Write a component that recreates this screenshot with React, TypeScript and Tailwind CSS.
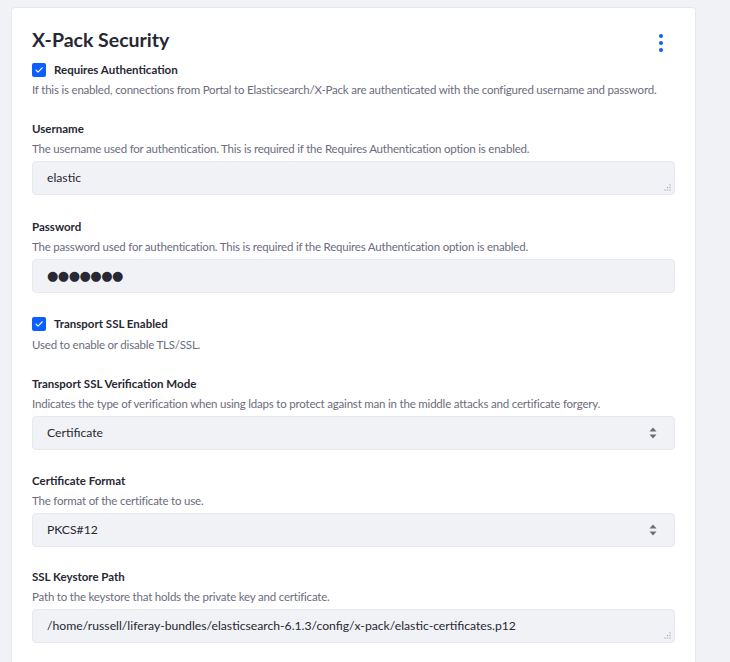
import React from "react";

const font = { fontFamily: "Lato, 'Noto Sans', sans-serif" };

function Check() {
  return (
    <span className="flex h-[14px] w-[14px] shrink-0 items-center justify-center rounded-[2px] bg-[#0b5fff]">
      <svg width="10" height="10" viewBox="0 0 10 10" fill="none">
        <path d="M2 5.2l2 2L8.2 2.8" stroke="#fff" strokeWidth="1.2" strokeLinecap="round" strokeLinejoin="round" />
      </svg>
    </span>
  );
}

function Grip() {
  return (
    <svg className="absolute bottom-[2px] right-[2px]" width="8" height="8" viewBox="0 0 8 8">
      {[
        [6, 1], [6, 3.5], [6, 6], [3.5, 3.5], [3.5, 6], [1, 6],
      ].map(([x, y], i) => (
        <circle key={i} cx={x} cy={y} r="0.7" fill="#a7a9bc" />
      ))}
    </svg>
  );
}

function Arrows() {
  return (
    <svg className="ml-auto mr-[17px]" width="8" height="12" viewBox="0 0 8 12">
      <path d="M4 0.5L7.5 4.5H0.5Z" fill="#6b6c7e" />
      <path d="M4 11.5L7.5 7.5H0.5Z" fill="#6b6c7e" />
    </svg>
  );
}

function Label({ children }: { children: React.ReactNode }) {
  return <div className="text-[11.5px] font-bold leading-4 text-[#272833]">{children}</div>;
}

function Help({ children, className = "" }: { children: React.ReactNode; className?: string }) {
  return (
    <div className={`text-[11.5px] leading-4 tracking-[-0.2px] text-[#6b6c7e] ${className}`}>{children}</div>
  );
}

function Box({ children, textarea, select }: { children: React.ReactNode; textarea?: boolean; select?: boolean }) {
  return (
    <div className="relative mt-[4px] flex h-[34px] items-center rounded-[4px] border border-[#e7e7ed] bg-[#f1f2f5] pl-[14px] text-[12.2px] text-[#272833]">
      {children}
      {select && <Arrows />}
      {textarea && <Grip />}
    </div>
  );
}

export default function App() {
  return (
    <div className="min-h-screen bg-[#f1f2f5] pl-[11px] pr-[34px] pt-[7px]" style={font}>
      <div className="rounded-t-[4px] border border-b-0 border-[#e7e7ed] bg-white px-[20px] pb-[20px] pt-[20px]">
        <div className="flex items-start justify-between">
          <h1 className="text-[19.5px] font-bold leading-6 text-[#272833]">X-Pack Security</h1>
          <div className="mr-[12px] mt-[6px] flex flex-col gap-[3px]">
            <span className="h-[4px] w-[4px] rounded-full bg-[#0b5fff]" />
            <span className="h-[4px] w-[4px] rounded-full bg-[#0b5fff]" />
            <span className="h-[4px] w-[4px] rounded-full bg-[#0b5fff]" />
          </div>
        </div>

        <div className="mt-[10px] flex h-4 items-center gap-[8px]">
          <Check />
          <Label>Requires Authentication</Label>
        </div>
        <Help className="mt-[4px]">
          If this is enabled, connections from Portal to Elasticsearch/X-Pack are authenticated with the configured username and password.
        </Help>

        <div className="mt-[23px]">
          <Label>Username</Label>
          <Help className="mt-[4px]">The username used for authentication. This is required if the Requires Authentication option is enabled.</Help>
          <Box textarea>elastic</Box>
        </div>

        <div className="mt-[24px]">
          <Label>Password</Label>
          <Help className="mt-[4px]">The password used for authentication. This is required if the Requires Authentication option is enabled.</Help>
          <Box>
            <span className="text-[13px] tracking-[-0.5px]" style={{ fontFamily: "'DejaVu Sans', sans-serif" }}>●●●●●●●</span>
          </Box>
        </div>

        <div className="mt-[23px] flex h-4 items-center gap-[8px]">
          <Check />
          <Label>Transport SSL Enabled</Label>
        </div>
        <Help className="mt-[5px]">Used to enable or disable TLS/SSL.</Help>

        <div className="mt-[23px]">
          <Label>Transport SSL Verification Mode</Label>
          <Help className="mt-[4px]">Indicates the type of verification when using ldaps to protect against man in the middle attacks and certificate forgery.</Help>
          <Box select>Certificate</Box>
        </div>

        <div className="mt-[23px]">
          <Label>Certificate Format</Label>
          <Help className="mt-[4px]">The format of the certificate to use.</Help>
          <Box select>PKCS#12</Box>
        </div>

        <div className="mt-[22px]">
          <Label>SSL Keystore Path</Label>
          <Help className="mt-[4px]">Path to the keystore that holds the private key and certificate.</Help>
          <Box textarea>/home/russell/liferay-bundles/elasticsearch-6.1.3/config/x-pack/elastic-certificates.p12</Box>
        </div>
      </div>
    </div>
  );
}
